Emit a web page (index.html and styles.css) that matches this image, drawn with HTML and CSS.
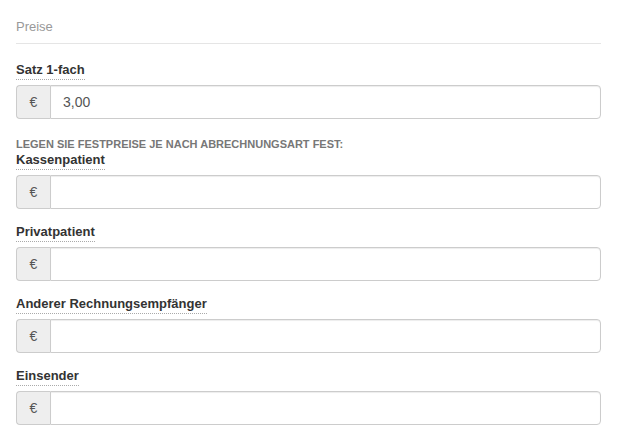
FILE: index.html
```html
<!DOCTYPE html>
<html lang="de">
<head>
    <meta charset="UTF-8">
    <title>Preise</title>
    <link rel="stylesheet" href="styles.css">
</head>
<body>
    <form class="price-form">
        <fieldset>
            <legend>Preise</legend>

            <div class="form-group">
                <label for="satz">Satz 1-fach</label>
                <div class="input-group">
                    <span class="addon">€</span>
                    <input type="text" id="satz" value="3,00">
                </div>
            </div>

            <div class="section-title">Legen Sie Festpreise je nach Abrechnungsart fest:</div>

            <div class="form-group">
                <label for="kasse">Kassenpatient</label>
                <div class="input-group">
                    <span class="addon">€</span>
                    <input type="text" id="kasse">
                </div>
            </div>

            <div class="form-group">
                <label for="privat">Privatpatient</label>
                <div class="input-group">
                    <span class="addon">€</span>
                    <input type="text" id="privat">
                </div>
            </div>

            <div class="form-group">
                <label for="andere">Anderer Rechnungsempfänger</label>
                <div class="input-group">
                    <span class="addon">€</span>
                    <input type="text" id="andere">
                </div>
            </div>

            <div class="form-group">
                <label for="einsender">Einsender</label>
                <div class="input-group">
                    <span class="addon">€</span>
                    <input type="text" id="einsender">
                </div>
            </div>
        </fieldset>
    </form>
</body>
</html>
```

FILE: styles.css
```css
/* Basic Reset */
* {
    margin: 0;
    padding: 0;
    box-sizing: border-box;
    font-family: "Liberation Sans", Arial, sans-serif;
}

body {
    background-color: #ffffff;
    color: #333;
    font-size: 13px;
}

/* Form Container */
.price-form {
    padding: 0 26px 0 16px;
}

fieldset {
    border: none;
}

legend {
    display: block;
    width: 100%;
    padding-top: 18px;
    padding-bottom: 7px;
    margin-bottom: 17px;
    font-size: 13px;
    line-height: 18px;
    color: #999;
    border-bottom: 1px solid #e5e5e5;
}

/* Field Groups */
.form-group {
    margin-bottom: 14px;
}

.form-group label {
    display: inline-block;
    margin-bottom: 5px;
    font-size: 13px;
    font-weight: bold;
    line-height: 18px;
    color: #333;
    border-bottom: 1px dotted #aaa;
}

.section-title {
    margin-top: 18px;
    font-size: 11px;
    font-weight: bold;
    line-height: 14px;
    color: #777;
    text-transform: uppercase;
}

/* Input Group */
.input-group {
    display: flex;
    height: 34px;
}

.addon {
    display: flex;
    align-items: center;
    justify-content: center;
    width: 34px;
    background-color: #eee;
    color: #555;
    font-size: 14px;
    border: 1px solid #ccc;
    border-right: none;
    border-radius: 4px 0 0 4px;
}

.input-group input {
    flex: 1;
    padding: 6px 12px;
    font-size: 14px;
    color: #555;
    border: 1px solid #ccc;
    border-radius: 0 4px 4px 0;
    outline: none;
    box-shadow: inset 0 1px 1px rgba(0, 0, 0, 0.075);
}
```
